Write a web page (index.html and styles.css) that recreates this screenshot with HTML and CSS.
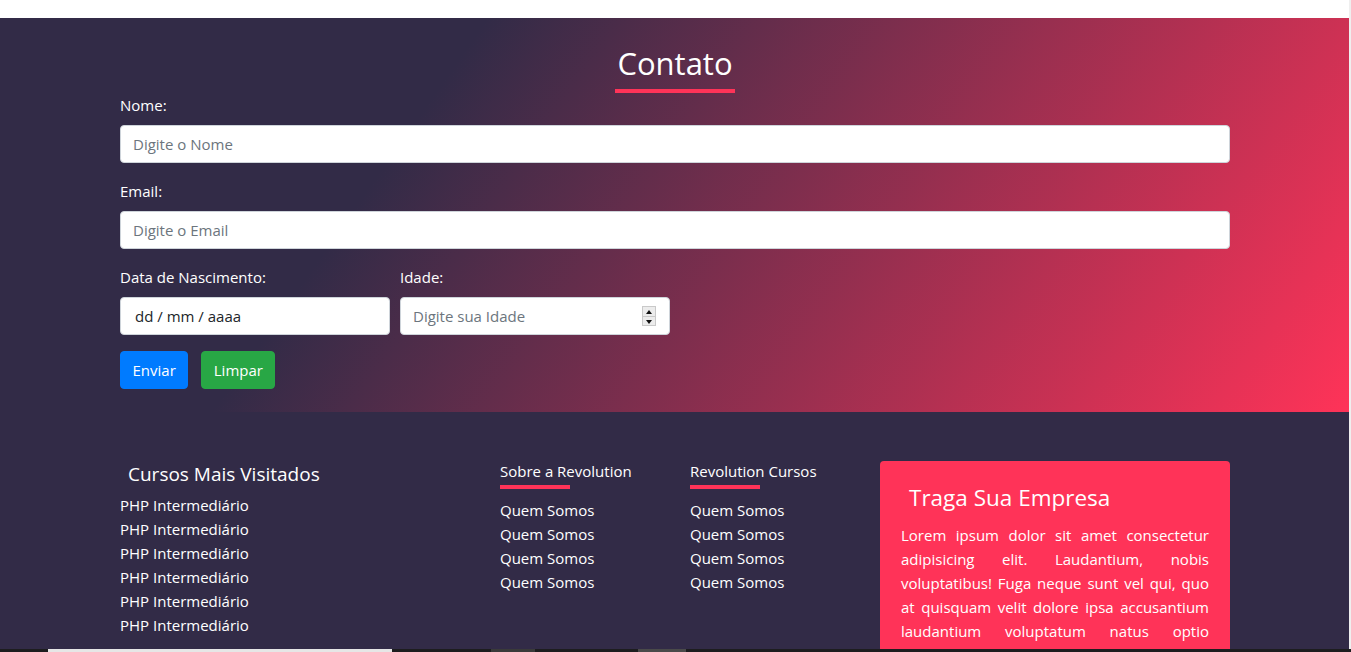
FILE: index.html
```html
<!DOCTYPE html>
<html lang="pt-BR">
<head>
<meta charset="utf-8">
<title>Contato</title>
<link rel="stylesheet" href="styles.css">
</head>
<body>
<div class="topbar"></div>
<section class="contato">
  <div class="container">
    <div class="titulo-wrap">
      <h2 class="titulo">Contato</h2>
      <div class="titulo-linha"></div>
    </div>
    <form class="form">
      <div class="form-group">
        <label class="label" for="nome">Nome:</label>
        <input class="form-control" id="nome" type="text" placeholder="Digite o Nome">
      </div>
      <div class="form-group">
        <label class="label" for="email">Email:</label>
        <input class="form-control" id="email" type="text" placeholder="Digite o Email">
      </div>
      <div class="form-row">
        <div class="form-col">
          <label class="label" for="nasc">Data de Nascimento:</label>
          <input class="form-control date" id="nasc" type="text" value="dd / mm / aaaa" readonly>
        </div>
        <div class="form-col">
          <label class="label" for="idade">Idade:</label>
          <div class="num-wrap">
            <input class="form-control" id="idade" type="text" placeholder="Digite sua Idade">
            <span class="spin"><span class="spin-up"></span><span class="spin-down"></span></span>
          </div>
        </div>
      </div>
      <div class="botoes">
        <button class="btn btn-primary" type="button">Enviar</button>
        <button class="btn btn-success" type="button">Limpar</button>
      </div>
    </form>
  </div>
</section>
<footer class="rodape">
  <div class="container rodape-grid">
    <div class="col-cursos">
      <h5 class="cursos-titulo">Cursos Mais Visitados</h5>
      <ul class="lista lista-cursos">
        <li>PHP Intermediário</li>
        <li>PHP Intermediário</li>
        <li>PHP Intermediário</li>
        <li>PHP Intermediário</li>
        <li>PHP Intermediário</li>
        <li>PHP Intermediário</li>
      </ul>
    </div>
    <div class="col-links">
      <h6 class="links-titulo">Sobre a Revolution</h6>
      <div class="links-linha"></div>
      <ul class="lista">
        <li>Quem Somos</li>
        <li>Quem Somos</li>
        <li>Quem Somos</li>
        <li>Quem Somos</li>
      </ul>
    </div>
    <div class="col-links">
      <h6 class="links-titulo">Revolution Cursos</h6>
      <div class="links-linha"></div>
      <ul class="lista">
        <li>Quem Somos</li>
        <li>Quem Somos</li>
        <li>Quem Somos</li>
        <li>Quem Somos</li>
      </ul>
    </div>
    <div class="empresa">
      <h4 class="empresa-titulo">Traga Sua Empresa</h4>
      <p class="empresa-texto">Lorem ipsum dolor sit amet consectetur adipisicing elit. Laudantium, nobis voluptatibus! Fuga neque sunt vel qui, quo at quisquam velit dolore ipsa accusantium laudantium voluptatum natus optio dignissimos eius quae aut veniam.</p>
    </div>
  </div>
</footer>
<div class="scroll-edge"></div>
<div class="taskbar"><span class="tb-a"></span><span class="tb-b"></span><span class="tb-c"></span></div>
</body>
</html>
```
FILE: styles.css
```css
* { box-sizing: border-box; }
html, body { margin: 0; padding: 0; }
body {
  padding-right: 1px;
  font-family: "Open Sans", "Noto Sans", sans-serif;
  font-size: 16px;
  line-height: 24px;
  color: #fff;
  background: #322b47;
  overflow: hidden;
}
.topbar { height: 18px; background: #fff; }
.container { width: 1110px; margin: 0 auto; }

.contato {
  background: linear-gradient(125deg, #322b47 30%, #ff3358 100%);
  padding: 26px 0 23px;
}
.titulo-wrap { display: flex; flex-direction: column; align-items: center; }
.titulo {
  margin: 0;
  font-size: 31px;
  line-height: 38px;
  font-weight: 400;
  color: #fff;
}
.titulo-linha { width: 120px; height: 4px; margin-top: 7px; background: #ff3358; }

.form-group { margin-bottom: 16px; }
.label { display: block; margin-bottom: 8px; font-size: 15px; line-height: 24px; }
.form-control {
  display: block;
  width: 100%;
  height: 38px;
  padding: 6px 12px;
  font: inherit;
  font-size: 15px;
  color: #495057;
  background: #fff;
  border: 1px solid #ced4da;
  border-radius: 4px;
  outline: none;
}
.form-control::placeholder { color: #6c757d; }
.date { padding-left: 14px; color: #212529; }
.form-row { display: flex; gap: 10px; margin-bottom: 16px; }
.form-col { width: 270px; }
.num-wrap { position: relative; }
.spin {
  position: absolute;
  right: 14px;
  top: 9px;
  width: 14px;
  height: 20px;
  display: flex;
  flex-direction: column;
  border: 1px solid #c9c9c9;
  background: #ececec;
}
.spin-up, .spin-down { flex: 1; position: relative; }
.spin-up { border-bottom: 1px solid #c9c9c9; }
.spin-up::after, .spin-down::after {
  content: "";
  position: absolute;
  left: 3px;
  width: 0; height: 0;
  border-left: 3px solid transparent;
  border-right: 3px solid transparent;
}
.spin-up::after { top: 3px; border-bottom: 4px solid #111; }
.spin-down::after { top: 3px; border-top: 4px solid #111; }

.botoes { display: flex; gap: 13px; }
.btn {
  height: 38px;
  padding: 0 11.5px;
  font: inherit;
  font-size: 15px;
  color: #fff;
  border: 1px solid transparent;
  border-radius: 4px;
}
.btn-primary { background: #007bff; border-color: #007bff; }
.btn-success { background: #28a745; border-color: #28a745; }

.rodape { padding-top: 47px; background: #322b47; }
.rodape-grid {
  display: grid;
  grid-template-columns: 350px 160px 160px 350px;
  column-gap: 30px;
  align-items: start;
}
.lista { list-style: none; margin: 0; padding: 0; }
.lista li { font-size: 15px; line-height: 24px; }
.cursos-titulo {
  margin: 3px 0 0;
  padding-left: 8px;
  font-size: 19px;
  line-height: 24px;
  font-weight: 400;
}
.lista-cursos { margin-top: 7px; }
.links-titulo { margin: 0; font-size: 15px; line-height: 24px; font-weight: 400; }
.links-linha { width: 70px; height: 4px; margin: 2px 0 9px; background: #ff3358; }
.empresa {
  margin-top: 2px;
  padding: 22px 21px 40px;
  background: #ff3358;
  border-radius: 4px;
}
.empresa-titulo {
  margin: 0 0 11px;
  padding-left: 8px;
  font-size: 22.5px;
  line-height: 29px;
  font-weight: 400;
}
.empresa-texto { margin: 0; font-size: 15px; line-height: 24px; text-align: justify; }

.scroll-edge {
  position: fixed;
  top: 0; right: 0;
  width: 2px; height: 100%;
  background: #efefef;
}
.taskbar {
  position: fixed;
  left: 0; right: 0; bottom: 0;
  height: 3px;
  background: #1d1d1f;
}
.taskbar span { position: absolute; top: 0; height: 3px; }
.tb-a { left: 48px; width: 344px; background: #e6e6e6; }
.tb-b { left: 491px; width: 44px; background: #3a3a3a; }
.tb-c { left: 638px; width: 48px; background: #4a4a4a; }
```
